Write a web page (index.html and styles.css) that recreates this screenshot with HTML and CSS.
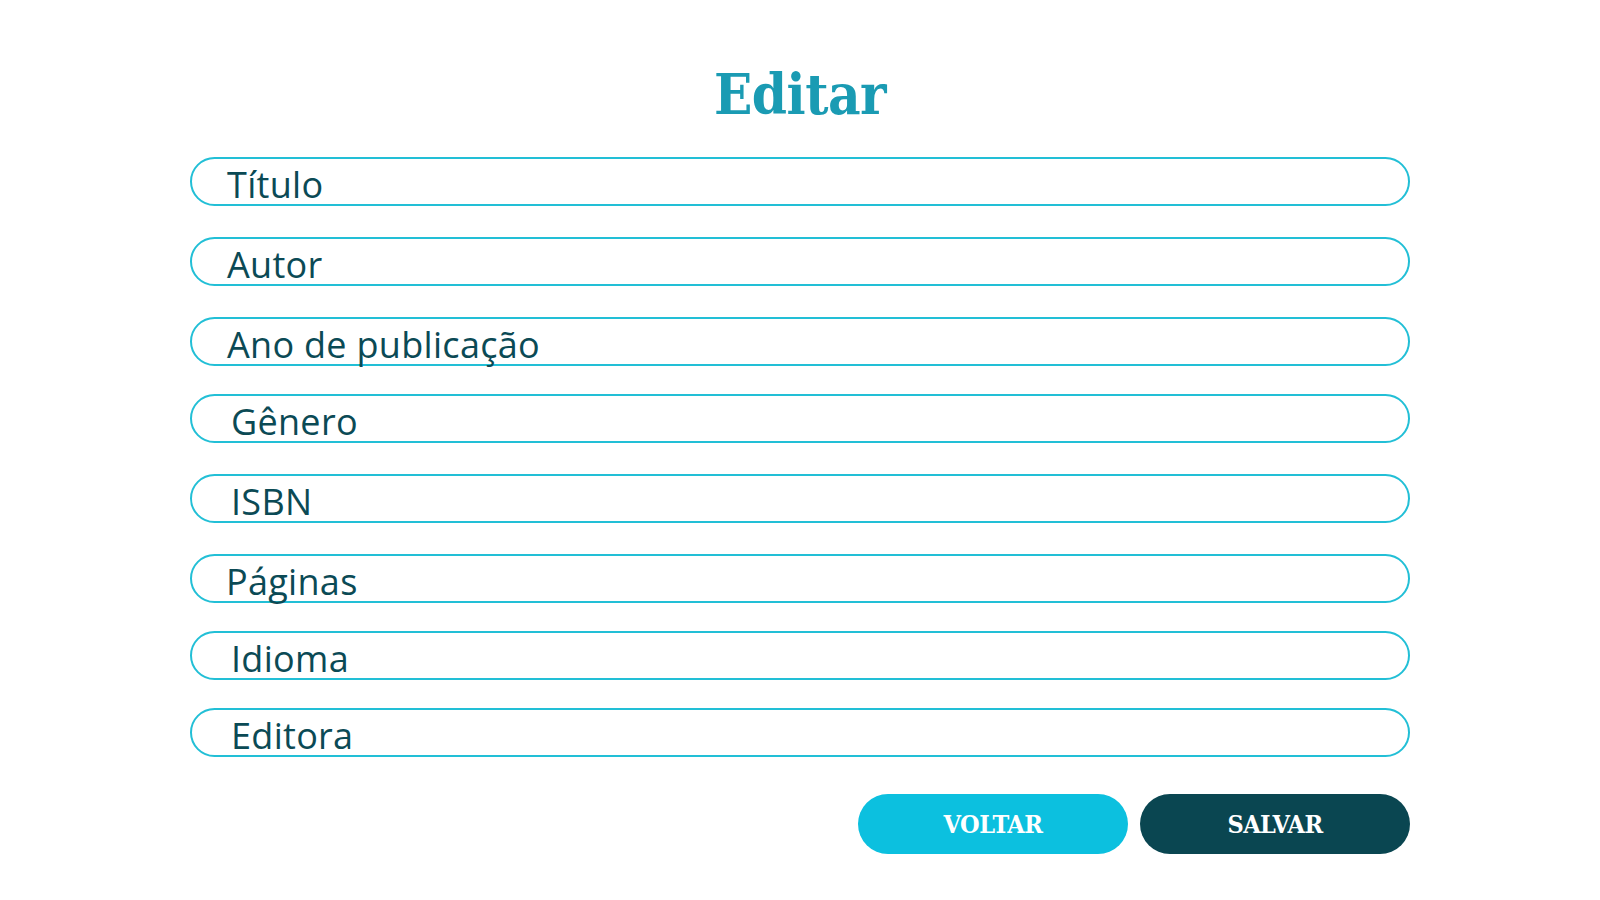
FILE: index.html
```html
<!DOCTYPE html>
<html lang="pt-BR">
<head>
<meta charset="utf-8">
<title>Editar</title>
<link rel="stylesheet" href="styles.css">
</head>
<body>
<main class="page">
  <h1 class="title">Editar</h1>
  <form class="form">
    <div class="field"><span class="label">Título</span></div>
    <div class="field"><span class="label">Autor</span></div>
    <div class="field field--tight"><span class="label">Ano de publicação</span></div>
    <div class="field"><span class="label label--in">Gênero</span></div>
    <div class="field"><span class="label label--in">ISBN</span></div>
    <div class="field field--tight"><span class="label label--out">Páginas</span></div>
    <div class="field field--tight"><span class="label label--in">Idioma</span></div>
    <div class="field field--last"><span class="label label--in">Editora</span></div>
    <div class="actions">
      <button type="button" class="btn btn--back">VOLTAR</button>
      <button type="button" class="btn btn--save">SALVAR</button>
    </div>
  </form>
</main>
</body>
</html>
```

FILE: styles.css
```css
* { box-sizing: border-box; }
html, body { margin: 0; padding: 0; background: #ffffff; }
body { font-family: "Open Sans", "Noto Sans", sans-serif; }

.page {
  width: 1220px;
  margin: 0 auto;
  padding-top: 62px;
}

.title {
  margin: 0 0 31px;
  text-align: center;
  font-family: "DejaVu Serif Condensed", "DejaVu Serif", serif;
  font-stretch: condensed;
  font-weight: bold;
  font-size: 56px;
  line-height: 64px;
  letter-spacing: -0.5px;
  color: #1a9bb3;
}

.form {
  display: flex;
  flex-direction: column;
}

.field {
  height: 49px;
  border: 2px solid #22bfd6;
  border-radius: 25px;
  padding: 0 0 0 35px;
  margin-bottom: 31px;
}
.field--tight { margin-bottom: 28px; }
.field--last { margin-bottom: 37px; }

.label {
  display: block;
  font-size: 36px;
  line-height: 45px;
  padding-top: 3px;
  letter-spacing: 0.3px;
  color: #0b4a55;
  white-space: nowrap;
}
.label--in { padding-left: 4px; }
.label--out { margin-left: -1px; }

.actions {
  display: flex;
  justify-content: flex-end;
  gap: 12px;
}

.btn {
  width: 270px;
  height: 60px;
  border: none;
  border-radius: 30px;
  font-family: "DejaVu Serif Condensed", "DejaVu Serif", serif;
  font-stretch: condensed;
  font-weight: bold;
  font-size: 25px;
  letter-spacing: -0.5px;
  color: #ffffff;
  cursor: pointer;
}
.btn--back { background: #0cc0df; }
.btn--save { background: #0a4651; }
```
